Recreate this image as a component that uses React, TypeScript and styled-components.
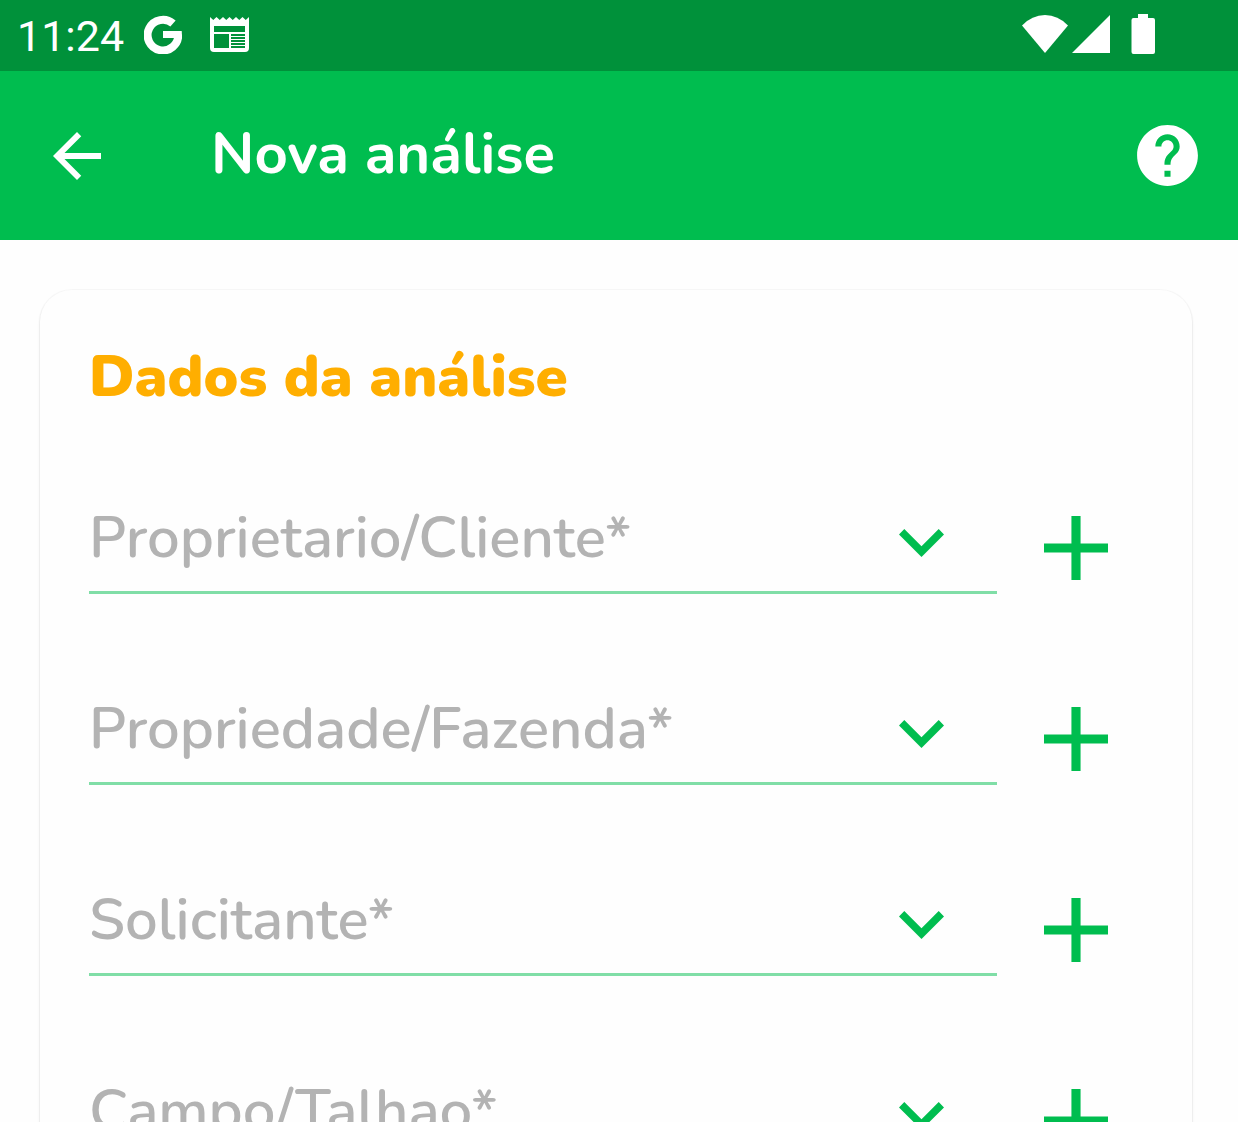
import React, { useId, useState } from "react";
import styled, { createGlobalStyle } from "styled-components";

const green = "#00bd4f";

const GlobalStyle = createGlobalStyle`
  *, *::before, *::after { box-sizing: border-box; }
  body { margin: 0; background: #fefefe; }
  button, select { font: inherit; }
`;

const Screen = styled.div`
  display: flex;
  flex-direction: column;
  height: 100vh;
  overflow: hidden;
  background: #fefefe;
  font-family: Nunito, Lato, "Open Sans", sans-serif;
`;

const StatusBar = styled.div`
  flex: none;
  display: flex;
  align-items: center;
  justify-content: space-between;
  height: 71px;
  padding: 0 83px 3px 17px;
  background: #00913a;
  color: #fff;
`;

const StatusGroup = styled.div<{ $gap: number }>`
  display: flex;
  align-items: center;
  gap: ${(p) => p.$gap}px;
`;

const Clock = styled.time`
  font-family: Roboto, sans-serif;
  font-size: 43px;
  line-height: 48px;
  padding-top: 4px;
  margin-right: -8px;
`;

const AppBar = styled.header`
  flex: none;
  display: flex;
  align-items: center;
  height: 169px;
  padding: 0 34px 0 41px;
  background: ${green};
  color: #fff;
`;

const Title = styled.h1`
  flex: 1;
  margin: 0;
  padding: 0 0 4px 98px;
  font-size: 58px;
  line-height: 72px;
  font-weight: 700;
`;

const IconButton = styled.button`
  display: flex;
  flex: none;
  padding: 0;
  border: 0;
  background: none;
  color: inherit;
  cursor: pointer;
`;

const AddButton = styled(IconButton)`
  color: ${green};
  margin-bottom: 14px;
`;

const Content = styled.main`
  flex: 1;
  min-height: 0;
  overflow-y: auto;
  scrollbar-width: none;
  padding: 50px 46px 50px 40px;
`;

const Card = styled.form`
  padding: 47px 84px 60px 49px;
  border-radius: 32px;
  background: #fefefe;
  box-shadow: 0 0 1px 1px rgba(0, 0, 0, 0.03), 0 2px 3px rgba(0, 0, 0, 0.1);
`;

const SectionTitle = styled.h2`
  margin: 0 0 81px;
  color: #ffae00;
  font-size: 58px;
  line-height: 80px;
  font-weight: 900;
`;

const Rows = styled.div`
  display: flex;
  flex-direction: column;
  gap: 95px;
`;

const Row = styled.div`
  display: flex;
  align-items: flex-end;
  gap: 47px;
`;

const Field = styled.div`
  flex: 1;
  min-width: 0;
  display: grid;
  grid-template-columns: 1fr auto;
  align-items: center;
  height: 96px;
  padding-bottom: 4px;
  border-bottom: 3px solid #80dea7;
  color: ${green};
`;

const Label = styled.label`
  grid-area: 1 / 1;
  padding-bottom: 10px;
  color: #b3b3b3;
  font-size: 58px;
  line-height: 72px;
  font-weight: 600;
  white-space: nowrap;
  pointer-events: none;
`;

const Select = styled.select`
  grid-area: 1 / 1 / 2 / 3;
  align-self: stretch;
  width: 100%;
  border: 0;
  appearance: none;
  background: transparent;
  color: #444;
  font-size: 58px;
`;

const Chevron = styled.svg`
  grid-area: 1 / 2;
  margin-right: 53px;
  pointer-events: none;
`;

function SelectRow({ label }: { label: string }) {
  const id = useId();
  const [value, setValue] = useState("");
  return (
    <Row>
      <Field>
        <Select id={id} value={value} onChange={(e) => setValue(e.target.value)} required>
          <option value="" />
        </Select>
        <Label htmlFor={id}>{label}</Label>
        <Chevron width="45" height="28" viewBox="6 8.59 12 7.41" fill="currentColor" aria-hidden="true">
          <path d="M16.59 8.59 12 13.17 7.41 8.59 6 10l6 6 6-6z" />
        </Chevron>
      </Field>
      <AddButton type="button" aria-label="+">
        <svg width="64" height="64" viewBox="5 5 14 14" fill="currentColor">
          <path d="M19 13h-6v6h-2v-6H5v-2h6V5h2v6h6z" />
        </svg>
      </AddButton>
    </Row>
  );
}

const fields = ["Proprietario/Cliente*", "Propriedade/Fazenda*", "Solicitante*", "Campo/Talhao*"];

export default function App() {
  return (
    <>
      <GlobalStyle />
      <Screen>
        <StatusBar>
          <StatusGroup $gap={28}>
            <Clock>11:24</Clock>
            <svg width="38" height="39" viewBox="0 0 38 39" fill="none" aria-hidden="true">
              <path d="M29 8.600A15.300 15.300 0 1 0 34.200 19.500" stroke="#fff" strokeWidth="8" />
              <path d="M19 16h18.700q.8 7-2.200 12.500l-5.500-2.500v-3H19z" fill="#fff" />
            </svg>
            <svg width="39" height="35" viewBox="0 0 39 35" aria-hidden="true">
              <path
                fill="#fff"
                fillRule="evenodd"
                d="M0 0l3.250 3L6.500 0l3.250 3L13 0l3.250 3L19.500 0l3.250 3L26 0l3.250 3L32.500 0l3.250 3L39 0v31a4 4 0 0 1-4 4H4a4 4 0 0 1-4-4zM4 9v6h31V9zM4 17v14h15V17zM21 17v2h14v-2zM21 20v2h14v-2zM21 23v2h14v-2zM21 26v2h14v-2zM21 29v2h14v-2z"
              />
            </svg>
          </StatusGroup>
          <StatusGroup $gap={4}>
            <svg width="46" height="38" viewBox="0 0 46 38" fill="#fff" aria-hidden="true">
              <path d="M0 10.500Q10 0 23 0t23 10.500L23 38z" />
            </svg>
            <svg width="38" height="38" viewBox="0 0 38 38" fill="#fff" aria-hidden="true">
              <path d="M38 0v38H0z" />
            </svg>
            <svg width="41" height="40" viewBox="0 0 41 40" fill="#fff" aria-hidden="true">
              <path d="M24 0h10v4h5q2 0 2 2v32q0 2-2 2H19.500q-2 0-2-2V6q0-2 2-2H24z" />
            </svg>
          </StatusGroup>
        </StatusBar>
        <AppBar>
          <IconButton type="button" aria-label="←">
            <svg width="72" height="72" viewBox="0 0 24 24" fill="currentColor">
              <path d="M20 11H7.830l5.590-5.590L12 4l-8 8 8 8 1.410-1.410L7.830 13H20z" />
            </svg>
          </IconButton>
          <Title>Nova análise</Title>
          <IconButton type="button" aria-label="?">
            <svg width="73" height="73" viewBox="0 0 24 24" fill="currentColor">
              <path d="M12 2C6.480 2 2 6.480 2 12s4.480 10 10 10 10-4.480 10-10S17.520 2 12 2zm1 17h-2v-2h2zm2.070-7.750-.9.920C13.450 12.900 13 13.500 13 15h-2v-.5c0-1.100.450-2.100 1.170-2.830l1.240-1.260c.370-.360.590-.860.590-1.410 0-1.100-.9-2-2-2s-2 .9-2 2H8c0-2.210 1.790-4 4-4s4 1.790 4 4c0 .880-.360 1.680-.930 2.250z" />
            </svg>
          </IconButton>
        </AppBar>
        <Content>
          <Card>
            <SectionTitle>Dados da análise</SectionTitle>
            <Rows>
              {fields.map((label) => (
                <SelectRow key={label} label={label} />
              ))}
            </Rows>
          </Card>
        </Content>
      </Screen>
    </>
  );
}
